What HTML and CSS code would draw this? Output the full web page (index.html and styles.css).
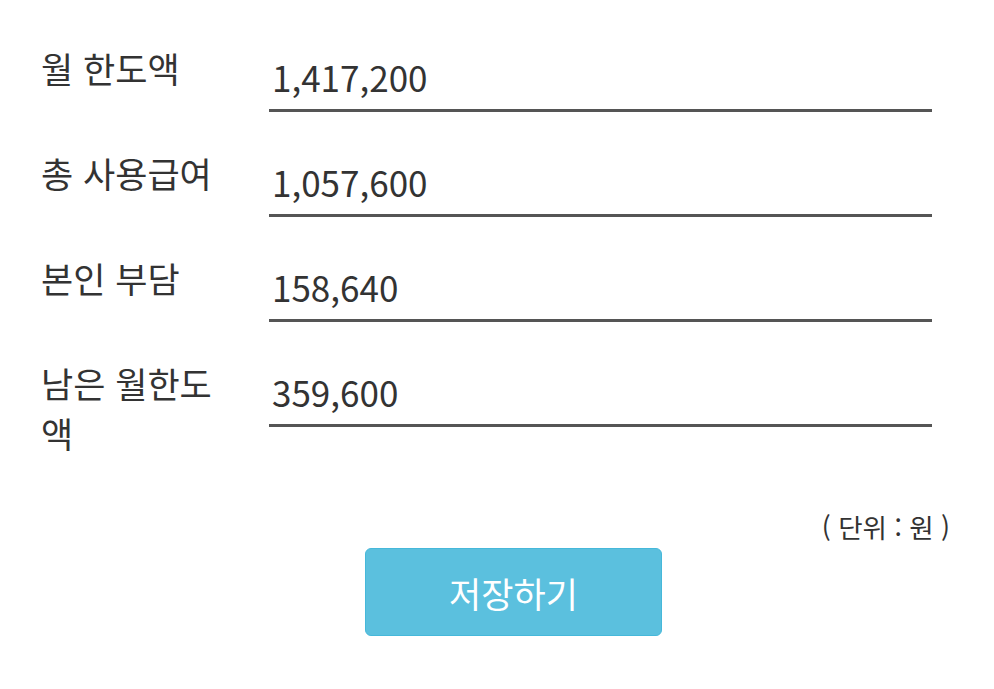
FILE: index.html
```html
<!DOCTYPE html>
<html lang="ko">
<head>
<meta charset="utf-8">
<link rel="stylesheet" href="styles.css">
</head>
<body>
<div class="page">
  <div class="row">
    <div class="label">월 한도액</div>
    <div class="field">1,417,200</div>
  </div>
  <div class="row">
    <div class="label">총 사용급여</div>
    <div class="field">1,057,600</div>
  </div>
  <div class="row">
    <div class="label">본인 부담</div>
    <div class="field">158,640</div>
  </div>
  <div class="row">
    <div class="label">남은 월한도액</div>
    <div class="field">359,600</div>
  </div>
  <div class="unit">( 단위 : 원 )</div>
  <div class="actions">
    <button class="save">저장하기</button>
  </div>
</div>
</body>
</html>
```
FILE: styles.css
```css
html, body {
  margin: 0;
  padding: 0;
  background: #fff;
}
body {
  font-family: "Noto Sans CJK KR", "Noto Sans", sans-serif;
  color: #333;
}
.page {
  padding: 43px 46px 0 41px;
  display: flex;
  flex-direction: column;
}
.row {
  display: flex;
  align-items: flex-start;
  margin-bottom: 36px;
  width: 891px;
}
.label {
  width: 190px;
  padding-right: 38px;
  font-size: 35px;
  line-height: 50px;
  flex: none;
}
.field {
  flex: 1;
  font-size: 35px;
  line-height: 40px;
  padding: 14px 4px 12px 3px;
  border-bottom: 3px solid #555;
}
.unit {
  align-self: flex-end;
  font-size: 26.5px;
  line-height: 30px;
  margin-top: 18px;
  margin-right: -2px;
}
.actions {
  display: flex;
  padding-left: 324px;
  margin-top: 6px;
}
.save {
  width: 297px;
  height: 88px;
  background: #5bc0de;
  border: 1px solid #46b8da;
  border-radius: 6px;
  color: #fff;
  font-family: "Noto Sans CJK KR", "Noto Sans", sans-serif;
  font-size: 35px;
  padding: 0;
}
```
